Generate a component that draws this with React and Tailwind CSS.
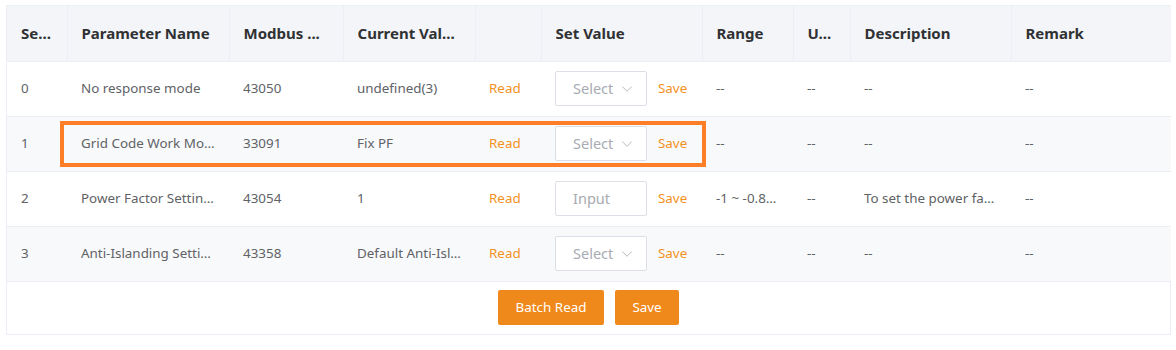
import { ChevronDown } from 'lucide-react'

const columns = [
  { label: 'Serial No.', short: 'Se...', w: 'w-[60px]' },
  { label: 'Parameter Name', w: 'w-[162px]' },
  { label: 'Modbus Address', short: 'Modbus ...', w: 'w-[114px]' },
  { label: 'Current Value', short: 'Current Val...', w: 'w-[132px]' },
  { label: '', w: 'w-[66px]' },
  { label: 'Set Value', w: 'w-[161px]' },
  { label: 'Range', w: 'w-[91px]' },
  { label: 'Unit', short: 'U...', w: 'w-[57px]' },
  { label: 'Description', w: 'w-[161px]' },
  { label: 'Remark', w: 'w-[160px]' },
]

const rows = [
  { no: 0, name: 'No response mode', addr: '43050', value: 'undefined(3)', kind: 'select', range: '--', unit: '--', desc: '--', remark: '--' },
  { no: 1, name: 'Grid Code Work Mode', addr: '33091', value: 'Fix PF', kind: 'select', range: '--', unit: '--', desc: '--', remark: '--' },
  { no: 2, name: 'Power Factor Setting Value', addr: '43054', value: '1', kind: 'input', range: '-1 ~ -0.8, 0.8 ~ 1', unit: '--', desc: 'To set the power factor of the inverter', remark: '--' },
  { no: 3, name: 'Anti-Islanding Setting', addr: '43358', value: 'Default Anti-Islanding', kind: 'select', range: '--', unit: '--', desc: '--', remark: '--' },
]

function Cell({ children, className = '' }) {
  return (
    <td className={`px-[14px] h-[55px] border-b border-[#ebeef5] ${className}`}>
      <div className="truncate">{children}</div>
    </td>
  )
}

function SetValue({ kind }) {
  return (
    <div className="flex items-center gap-[11px]">
      {kind === 'select' ? (
        <div className="flex h-[35px] w-[92px] shrink-0 items-center justify-between rounded-[2px] border border-[#dcdfe6] bg-white pl-[17px] pr-[10px] text-[14.5px] text-[#a8abb2]">
          <span>Select</span>
          <ChevronDown size={18} strokeWidth={1.1} className="text-[#a8abb2]" />
        </div>
      ) : (
        <div className="flex h-[35px] w-[92px] shrink-0 items-center rounded-[2px] border border-[#dcdfe6] bg-white pl-[17px] text-[14.5px] text-[#a8abb2]">
          Input
        </div>
      )}
      <span className="text-[#f39223]">Save</span>
    </div>
  )
}

export default function App() {
  return (
    <div className="bg-white pt-[5px] pl-[6px] pr-[5px] font-['Noto_Sans','Open_Sans',sans-serif] text-[13.4px] text-[#606266]">
      <div className="relative w-[1165px] border border-[#ebeef5]">
        <table className="w-[1164px] table-fixed border-collapse">
          <colgroup>
            {columns.map((c, i) => (
              <col key={i} className={c.w} />
            ))}
          </colgroup>
          <thead>
            <tr className="bg-[#f3f5f9]">
              {columns.map((c, i) => (
                <th
                  key={i}
                  className={`h-[55px] px-[14px] text-left text-[15px] font-bold text-[#303133] border-b border-[#ebeef5] ${i < columns.length - 1 ? 'border-r' : ''}`}
                >
                  <div className="truncate">{c.short || c.label}</div>
                </th>
              ))}
            </tr>
          </thead>
          <tbody>
            {rows.map((r) => (
              <tr key={r.no} className={r.no % 2 ? 'bg-[#f8f9fb]' : 'bg-white'}>
                <Cell>{r.no}</Cell>
                <Cell>{r.name}</Cell>
                <Cell>{r.addr}</Cell>
                <Cell>{r.value}</Cell>
                <Cell className="text-[#f39223]">Read</Cell>
                <td className="px-[14px] h-[55px] border-b border-[#ebeef5]">
                  <SetValue kind={r.kind} />
                </td>
                <Cell>{r.range}</Cell>
                <Cell>{r.unit}</Cell>
                <Cell>{r.desc}</Cell>
                <Cell>{r.remark}</Cell>
              </tr>
            ))}
          </tbody>
        </table>

        <div className="flex h-[52px] items-start justify-center gap-[11px] pt-[8px]">
          <button className="h-[35px] w-[106px] rounded-[2px] bg-[#f0891c] text-[13.4px] text-white">Batch Read</button>
          <button className="h-[35px] w-[64px] rounded-[2px] bg-[#f0891c] text-[13.4px] text-white">Save</button>
        </div>

        {/* highlight around the grid code row */}
        <div className="pointer-events-none absolute left-[53px] top-[115px] h-[46px] w-[646px] border-[4px] border-[#fd7e26]" />
      </div>
    </div>
  )
}
